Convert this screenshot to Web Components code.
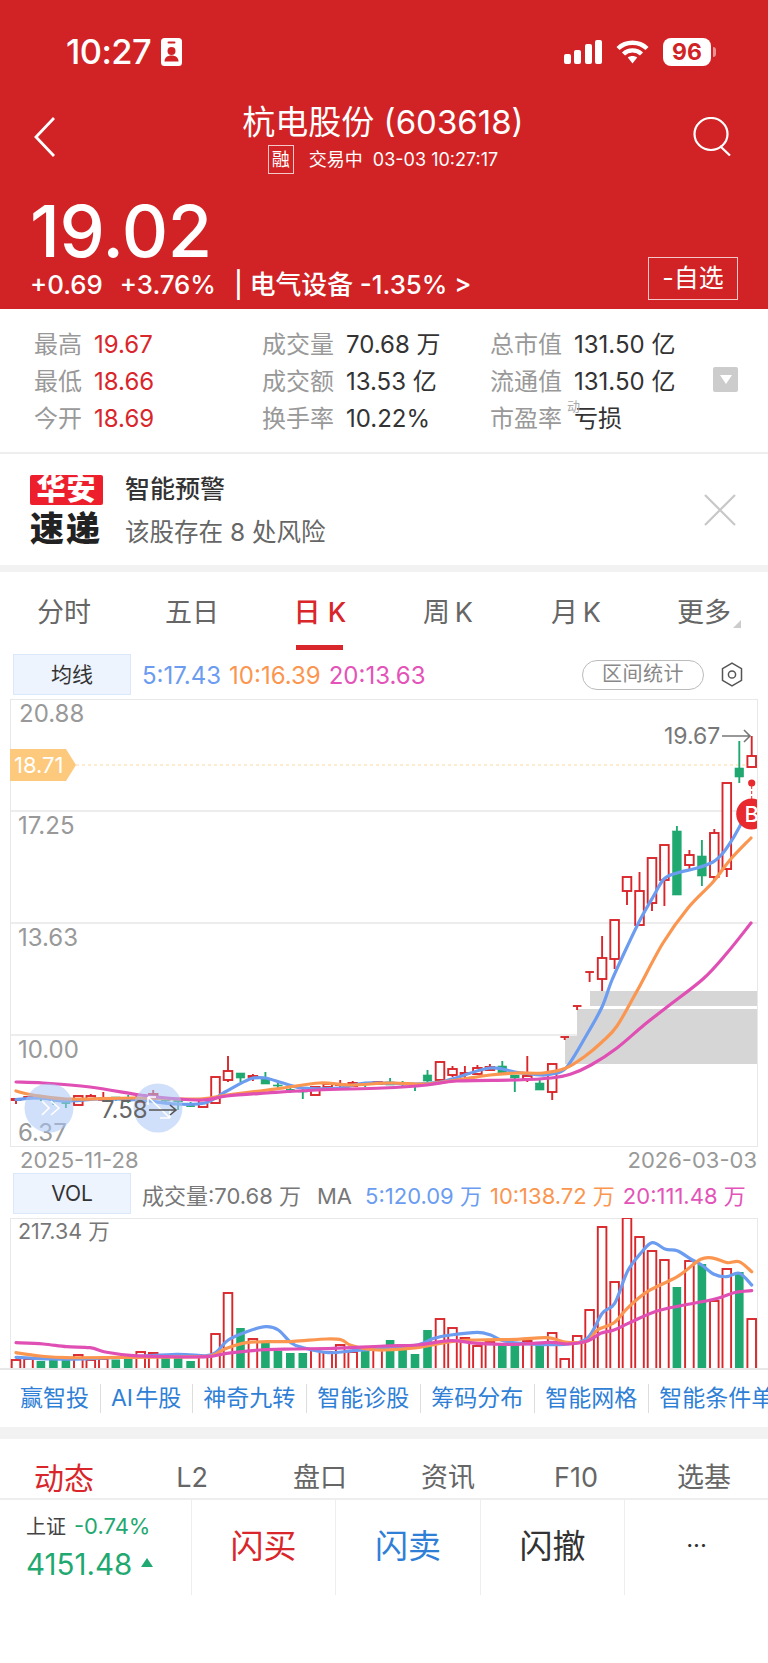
<!DOCTYPE html>
<html lang="zh">
<head>
<meta charset="utf-8">
<title>杭电股份</title>
<style>
  html, body { margin: 0; background: #fff; }
  body { width: 768px; height: 1663px; overflow: hidden; font-family: Inter, "Noto Sans CJK SC", sans-serif; color: #333; }
</style>
</head>
<body>
<x-stock-header></x-stock-header>
<x-quote-stats></x-quote-stats>
<x-alert-card></x-alert-card>
<x-tab-strip class="period" active="2" items="分时,五日,日 K,周&#8201;K,月&#8201;K,更多"></x-tab-strip>
<x-ma-row label="均线">
  <span style="color:#6b9cf0">5:17.43</span>
  <span style="color:#fb9650">10:16.39</span>
  <span style="color:#e353b8">20:13.63</span>
</x-ma-row>
<x-kline-chart></x-kline-chart>
<x-date-axis from="2025-11-28" to="2026-03-03"></x-date-axis>
<x-ma-row label="VOL" class="vol">
  <span style="color:#777">成交量:70.68 万</span>
  <span style="color:#777;margin-left:8px">MA</span>
  <span style="color:#6b9cf0;margin-left:5px">5:120.09 万</span>
  <span style="color:#fb9650">10:138.72 万</span>
  <span style="color:#e353b8">20:111.48 万</span>
</x-ma-row>
<x-vol-chart></x-vol-chart>
<x-quick-links items="赢智投,AI&#8202;牛股,神奇九转,智能诊股,筹码分布,智能网格,智能条件单"></x-quick-links>
<x-tab-strip class="detail" active="0" items="动态,L2,盘口,资讯,F10,选基"></x-tab-strip>
<x-trade-bar></x-trade-bar>

<script>
const RED = '#d9262b';
const GREEN = '#1fa971';
const BLUE = '#6b9cf0';
const ORANGE = '#fb9650';
const MAGENTA = '#e04fb4';
const FONT = 'Inter, "Noto Sans CJK SC", sans-serif';

const barX = i => 16 + 12.47 * i;

// catmull-rom through the read off points
function smooth(pts) {
    let d = `M${pts[0][0]} ${pts[0][1]}`;
    for (let i = 0; i < pts.length - 1; i++) {
        const p0 = pts[i - 1] || pts[i];
        const p1 = pts[i];
        const p2 = pts[i + 1];
        const p3 = pts[i + 2] || p2;
        const c1x = p1[0] + (p2[0] - p0[0]) / 6;
        const c1y = p1[1] + (p2[1] - p0[1]) / 6;
        const c2x = p2[0] - (p3[0] - p1[0]) / 6;
        const c2y = p2[1] - (p3[1] - p1[1]) / 6;
        d += `C${c1x.toFixed(1)} ${c1y.toFixed(1)} ${c2x.toFixed(1)} ${c2y.toFixed(1)} ${p2[0]} ${p2[1]}`;
    }
    return d;
}

function maLine(pts, color) {
    return `<path d="${smooth(pts)}" fill="none" stroke="${color}" stroke-width="3.2" stroke-linecap="round" stroke-linejoin="round"/>`;
}

class StockHeader extends HTMLElement {
    constructor() {
        super();
        this.attachShadow({ mode: 'open' });
    }
    connectedCallback() {
        this.shadowRoot.innerHTML = `<style>
        :host { display: block; height: 309px; background: #d12325; color: #fff; font-family: ${FONT}; overflow: hidden; }
        .status { display: flex; align-items: center; height: 28px; padding: 38px 57px 0 66px; }
        .time { font-size: 34.5px; font-weight: 500; letter-spacing: -0.6px; line-height: 28px; }
        .badge { margin-left: 10px; display: block; }
        .sys { margin-left: auto; display: flex; align-items: center; gap: 14px; }
        .batt { position: relative; width: 48px; height: 28px; border-radius: 8px; background: #fff; color: #d12325; font-size: 23px; font-weight: 700; line-height: 28px; text-align: center; }
        .batt::after { content: ''; position: absolute; right: -5px; top: 9px; width: 3px; height: 10px; border-radius: 0 3px 3px 0; background: rgba(255,255,255,.5); }
        .nav { display: grid; grid-template-columns: 1fr auto 1fr; align-items: start; margin-top: 36px; padding: 0 36px 0 34px; }
        .back { margin-top: 15px; display: block; }
        .search { margin-top: 15px; justify-self: end; display: block; }
        .mid { text-align: center; }
        .title { font-size: 33px; line-height: 41px; white-space: nowrap; }
        .sub { display: flex; justify-content: center; align-items: center; gap: 15px; margin-top: 2px; font-size: 18px; line-height: 29px; white-space: nowrap; }
        .rong { box-sizing: border-box; width: 26px; height: 29px; border: 1px solid rgba(255,255,255,.75); font-size: 18px; line-height: 27px; }
        .price-row { display: flex; justify-content: space-between; align-items: flex-end; margin-top: 21px; padding: 0 30px; }
        .price { font-size: 72px; font-weight: 500; line-height: 72px; letter-spacing: -0.5px; }
        .chg { display: flex; font-size: 25.8px; line-height: 30px; margin-top: 3px; white-space: nowrap; font-weight: 500; }
        .chg span + span { margin-left: 17px; }
        .watch { box-sizing: border-box; width: 90px; height: 43px; border: 1px solid rgba(255,255,255,.75); font-size: 25px; line-height: 41px; text-align: center; }
        </style>
        <div class="status">
            <span class="time">10:27</span>
            <svg class="badge" width="21" height="28" viewBox="0 0 21 28">
                <rect width="21" height="28" rx="3.5" fill="#fff"/>
                <rect x="6.5" y="3.5" width="8" height="2" rx="1" fill="#d12325"/>
                <circle cx="10.5" cy="13" r="4" fill="#d12325"/>
                <path d="M3.5 23.5c0-4 3-6 7-6s7 2 7 6z" fill="#d12325"/>
            </svg>
            <span class="sys">
                <svg width="38" height="24" viewBox="0 0 38 24" fill="#fff">
                    <rect x="0" y="14" width="7" height="10" rx="2"/>
                    <rect x="10" y="10" width="7" height="14" rx="2"/>
                    <rect x="21" y="4" width="7" height="20" rx="2"/>
                    <rect x="31" y="0" width="7" height="24" rx="2"/>
                </svg>
                <svg width="33" height="25" viewBox="0 0 33 25" fill="none" stroke="#fff" stroke-width="4.4">
                    <path d="M2 8.5C10 .8 23 .8 31 8.5"/>
                    <path d="M7.5 14c5-4.8 13-4.8 18 0"/>
                    <path d="M11.8 17.6l4.7 6 4.7-6c-2.6-2-6.8-2-9.4 0z" fill="#fff" stroke="none"/>
                </svg>
                <span class="batt">96</span>
            </span>
        </div>
        <div class="nav">
            <svg class="back" width="21" height="40" viewBox="0 0 21 40" fill="none" stroke="#fff" stroke-width="2.8">
                <path d="M20 1L2 20l18 19"/>
            </svg>
            <div class="mid">
                <div class="title">杭电股份 (603618)</div>
                <div class="sub">
                    <span class="rong">融</span>
                    <span>交易中&nbsp; 03-03 10:27:17</span>
                </div>
            </div>
            <svg class="search" width="39" height="39" viewBox="0 0 39 39" fill="none" stroke="#fff" stroke-width="2.2">
                <ellipse cx="18" cy="17" rx="16.5" ry="16"/>
                <path d="M27 29l10 9.5"/>
            </svg>
        </div>
        <div class="price-row">
            <div>
                <div class="price">19.02</div>
                <div class="chg">
                    <span>+0.69</span><span>+3.76%</span><span style="margin-left:18px">|&nbsp;电气设备 -1.35% &gt;</span>
                </div>
            </div>
            <div class="watch">-自选</div>
        </div>`;
    }
}

class QuoteStats extends HTMLElement {
    constructor() {
        super();
        this.attachShadow({ mode: 'open' });
    }
    connectedCallback() {
        const cell = (label, value, cls) => `<div class="cell"><span class="k">${label}</span><span class="v ${cls || ''}">${value}</span></div>`;
        this.shadowRoot.innerHTML = `<style>
        :host { display: block; box-sizing: border-box; height: 145px; padding: 15px 0 0 34px; border-bottom: 2px solid #eee; font-family: ${FONT}; font-size: 24px; }
        .grid { display: grid; grid-auto-flow: column; grid-template-columns: 228px 228px 223px 25px; grid-template-rows: repeat(3, 37px); align-items: center; white-space: nowrap; }
        .cell { position: relative; display: flex; align-items: baseline; gap: 12px; }
        .k { color: #999; }
        .v { color: #333; }
        .r { color: ${RED}; }
        .sup { position: absolute; left: 77px; top: -3px; font-size: 13px; color: #aaa; }
        .more { grid-column: 4; grid-row: 2; width: 25px; height: 25px; border-radius: 2px; background: #ccc; display: flex; align-items: center; justify-content: center; }
        .more::after { content: ''; border: 6px solid transparent; border-top: 9px solid #fff; border-bottom: 0; }
        </style>
        <div class="grid">
            ${cell('最高', '19.67', 'r')}${cell('最低', '18.66', 'r')}${cell('今开', '18.69', 'r')}
            ${cell('成交量', '70.68 万')}${cell('成交额', '13.53 亿')}${cell('换手率', '10.22%')}
            ${cell('总市值', '131.50 亿')}${cell('流通值', '131.50 亿')}
            <div class="cell"><span class="k">市盈率</span><span class="sup">动</span><span class="v">亏损</span></div>
            <div class="more"></div>
        </div>`;
    }
}

class AlertCard extends HTMLElement {
    constructor() {
        super();
        this.attachShadow({ mode: 'open' });
    }
    connectedCallback() {
        this.shadowRoot.innerHTML = `<style>
        :host { display: flex; align-items: center; box-sizing: border-box; height: 118px; padding: 0 32px 0 30px; border-bottom: 7px solid #f2f2f2; font-family: ${FONT}; }
        .logo { width: 73px; text-align: center; font-weight: 900; line-height: 1; }
        .hua { height: 30px; border-radius: 2px; background: #ee1f2d; color: #fff; font-size: 29px; line-height: 30px; letter-spacing: 1px; }
        .su { margin-top: 9px; color: #222; font-size: 34px; line-height: 30px; letter-spacing: 2px; margin-left: -1px; white-space: nowrap; }
        .txt { margin-left: 22px; padding-top: 2px; }
        .t1 { font-size: 25px; line-height: 34px; font-weight: 500; color: #333; }
        .t2 { font-size: 24.5px; line-height: 34px; margin-top: 9px; color: #666; white-space: nowrap; }
        svg { margin-left: auto; display: block; }
        </style>
        <div class="logo"><div class="hua">华安</div><div class="su">速递</div></div>
        <div class="txt">
            <div class="t1">智能预警</div>
            <div class="t2">该股存在 8 处风险</div>
        </div>
        <svg width="32" height="32" viewBox="0 0 32 32" stroke="#c8c8c8" stroke-width="2.2"><path d="M1 1l30 30M31 1L1 31"/></svg>`;
    }
}

class TabStrip extends HTMLElement {
    constructor() {
        super();
        this.attachShadow({ mode: 'open' });
    }
    connectedCallback() {
        const active = +this.getAttribute('active');
        const items = this.getAttribute('items').split(',');
        const period = this.classList.contains('period');
        const tabs = items.map((t, i) => {
            const corner = period && i == items.length - 1 ? '<i class="corner"></i>' : '';
            return `<div class="tab ${i == active ? 'on' : ''}">${t}${corner}</div>`;
        }).join('');
        this.shadowRoot.innerHTML = `<style>
        :host { display: grid; grid-template-columns: repeat(6, 128px); box-sizing: border-box; font-family: ${FONT}; font-size: 27px; color: #666; }
        :host(.period) { height: 82px; }
        :host(.detail) { height: 61px; border-bottom: 2px solid #eee; }
        .tab { position: relative; text-align: center; line-height: 82px; white-space: nowrap; }
        :host(.detail) .tab { line-height: 78px; }
        :host(.detail) .on { font-size: 30px; }
        .on { color: ${RED}; }
        :host(.period) .on { font-weight: 500; }
        :host(.period) .on::after { content: ''; position: absolute; left: 40px; width: 47px; bottom: 4px; height: 5px; background: ${RED}; }
        .corner { position: absolute; right: 27px; top: 48px; width: 0; height: 0; border-left: 8px solid transparent; border-bottom: 8px solid #ccc; }
        </style>${tabs}`;
    }
}

class MaRow extends HTMLElement {
    constructor() {
        super();
        this.attachShadow({ mode: 'open' });
    }
    connectedCallback() {
        const legend = this.classList.contains('vol') ? '' : `
            <span class="range">区间统计</span>
            <svg class="gear" width="22" height="25" viewBox="0 0 22 25" fill="none" stroke="#555" stroke-width="1.5">
                <path d="M11 1.2l9.5 5.5v11.6L11 23.8 1.5 18.3V6.7z"/>
                <circle cx="11" cy="12.5" r="3.6"/>
            </svg>`;
        this.shadowRoot.innerHTML = `<style>
        :host { display: flex; align-items: center; height: 45px; padding: 0 25px 4px 13px; font-family: ${FONT}; font-size: 24px; white-space: nowrap; box-sizing: border-box; }
        :host(.vol) { font-size: 22px; }
        .btn { box-sizing: border-box; flex: none; width: 118px; height: 41px; margin-right: 11px; border: 1px solid #dbe8fc; background: #eef4fe; color: #333; font-size: 21px; line-height: 39px; text-align: center; }
        .vals { display: flex; align-items: baseline; gap: 8px; padding-top: 1px; }
        .range { box-sizing: border-box; margin-left: auto; width: 122px; height: 30px; border: 1px solid #bbb; border-radius: 15px; color: #888; font-size: 20px; line-height: 27px; text-align: center; letter-spacing: 0.5px; }
        .gear { margin-left: 17px; display: block; }
        </style>
        <div class="btn">${this.getAttribute('label')}</div>
        <div class="vals"><slot></slot></div>${legend}`;
    }
}

const CANDLES = [
    // [body top, body bottom, wick top, wick bottom, up?]
    [1099, 1100, 1099, 1104, 1], [1097, 1098, 1096, 1100, 1], [1098, 1099, 1096, 1101, 0], [1099, 1100, 1098, 1105, 0],
    [1103, 1103, 1099, 1108, 0], [1096, 1105, 1096, 1105, 1], [1096, 1099, 1094, 1100, 1], [1098, 1100, 1092, 1100, 1],
    [1097, 1098, 1097, 1101, 0], [1099, 1101, 1095, 1103, 0], [1095, 1102, 1095, 1102, 1], [1094, 1096, 1090, 1097, 1],
    [1100, 1101, 1098, 1104, 0], [1100, 1102, 1100, 1110, 0], [1106, 1106, 1102, 1107, 0], [1100, 1107, 1100, 1107, 1],
    [1077, 1103, 1077, 1103, 1], [1071, 1080, 1056, 1082, 1], [1073, 1078, 1073, 1082, 0], [1076, 1077, 1074, 1081, 1],
    [1079, 1084, 1072, 1084, 0], [1085, 1086, 1083, 1088, 0], [1090, 1090, 1088, 1093, 0], [1091, 1092, 1088, 1099, 0],
    [1087, 1095, 1087, 1095, 1], [1084, 1087, 1084, 1087, 1], [1084, 1085, 1080, 1087, 1], [1083, 1086, 1081, 1086, 1],
    [1083, 1084, 1083, 1087, 0], [1082, 1084, 1082, 1085, 1], [1082, 1085, 1078, 1085, 0], [1084, 1084, 1081, 1086, 0],
    [1085, 1085, 1085, 1091, 0], [1075, 1081, 1070, 1083, 0], [1062, 1080, 1062, 1080, 1], [1069, 1075, 1066, 1077, 1],
    [1073, 1074, 1066, 1078, 1], [1068, 1074, 1065, 1074, 1], [1067, 1070, 1064, 1070, 1], [1066, 1073, 1061, 1075, 0],
    [1075, 1078, 1075, 1092, 0], [1076, 1079, 1056, 1082, 1], [1083, 1090, 1080, 1090, 0], [1064, 1092, 1064, 1100, 1],
    [1037, 1037, 1037, 1040, 1], [1006, 1006, 1006, 1010, 1], [972, 972, 972, 982, 1], [958, 979, 936, 991, 1],
    [920, 959, 920, 969, 1], [877, 891, 877, 905, 1], [891, 925, 872, 925, 1], [858, 903, 858, 911, 1],
    [845, 880, 845, 906, 1], [831, 895, 826, 895, 0], [855, 865, 850, 869, 1], [856, 876, 840, 886, 0],
    [833, 877, 829, 881, 1], [783, 869, 783, 877, 1], [768, 777, 741, 783, 0], [756, 767, 736, 767, 1],
];

const KLINE_MA = [
    [BLUE, [[16, 1099.5], [40, 1098], [65, 1101], [100, 1099], [140, 1100], [175, 1104], [205, 1103], [225, 1092], [250, 1079], [265, 1078], [283, 1083], [303, 1088], [340, 1088], [365, 1083], [415, 1084], [440, 1082], [452, 1079], [490, 1068], [515, 1072], [540, 1075], [552, 1074], [566, 1068], [586, 1036], [602, 1007], [612, 980], [627, 947], [640, 920], [653, 897], [664, 879], [677, 873], [697, 868], [713, 862], [723, 853], [732, 840], [741, 824], [746, 815]]],
    [ORANGE, [[16, 1091], [33, 1095], [67, 1099], [133, 1098], [200, 1099], [227, 1095], [260, 1091], [283, 1088], [320, 1083], [350, 1085], [390, 1083], [427, 1084], [457, 1080], [490, 1075], [517, 1073], [543, 1073], [566, 1068], [584, 1057], [602, 1042], [617, 1026], [637, 991], [663, 943], [688, 908], [713, 882], [730, 860], [751, 838]]],
    [MAGENTA, [[16, 1082], [43, 1083], [90, 1087], [140, 1095], [167, 1098], [203, 1100], [227, 1096], [267, 1093], [317, 1090], [383, 1088], [427, 1085], [457, 1081], [517, 1080], [551, 1078], [571, 1074], [591, 1065], [617, 1048], [644, 1025], [667, 1007], [703, 979], [727, 953], [751, 923]]],
];

class KlineChart extends HTMLElement {
    constructor() {
        super();
        this.attachShadow({ mode: 'open' });
    }
    _candles() {
        return CANDLES.map((c, i) => {
            const x = barX(i).toFixed(1);
            const col = c[4] ? RED : GREEN;
            const x0 = (barX(i) - 4.3).toFixed(1);
            let s = `<path d="M${x} ${c[2]}V${c[3]}" stroke="${col}" stroke-width="1.9"/>`;
            if (c[1] - c[0] < 1) {
                s += `<path d="M${x0} ${c[0]}h8.6" stroke="${col}" stroke-width="1.9"/>`;
            } else if (c[4]) {
                s += `<rect x="${x0}" y="${c[0]}" width="8.6" height="${c[1] - c[0]}" fill="#fff" stroke="${col}" stroke-width="1.9"/>`;
            } else {
                s += `<rect x="${x0}" y="${c[0]}" width="8.6" height="${c[1] - c[0]}" fill="${col}" stroke="${col}" stroke-width="0.6"/>`;
            }
            return s;
        }).join('');
    }
    connectedCallback() {
        this.shadowRoot.innerHTML = `<style>
        :host { display: block; box-sizing: border-box; width: 748px; height: 449px; margin-left: 10px; }
        svg { display: block; font-family: ${FONT}; }
        </style>
        <svg width="748" height="449" viewBox="10 699 748 449">
            <rect x="10.5" y="699.5" width="747" height="447" fill="#fff" stroke="#e8e8e8"/>
            <path d="M11 811h746M11 923h746M11 1035h746" stroke="#e8e8e8" stroke-width="1.5"/>
            <path d="M590 991h167v15H590zM577 1009h180v27H577zM565 1036h192v28H565z" fill="#d6d6d6"/>
            <path d="M76 765H757" stroke="#fdd9a4" stroke-width="1.2" stroke-dasharray="3 3"/>
            <g fill="#999" font-size="24">
                <text x="19" y="722">20.88</text>
                <text x="18" y="834">17.25</text>
                <text x="18" y="946">13.63</text>
                <text x="18" y="1058">10.00</text>
                <text x="18" y="1141">6.37</text>
            </g>
            ${this._candles()}
            ${KLINE_MA.map(m => maLine(m[1], m[0])).join('')}
            <polygon points="10,749 66,749 76,765 66,781 10,781" fill="#fdc97c"/>
            <text x="14" y="773" fill="#fff" font-size="22">18.71</text>
            <circle cx="49" cy="1108" r="24.5" fill="#a9c6f6" opacity=".55"/>
            <circle cx="158" cy="1108" r="24.5" fill="#a9c6f6" opacity=".55"/>
            <path d="M42 1101l7 7-7 7M51 1101l8 7-8 7" fill="none" stroke="#fff" stroke-width="1.6"/>
            <path d="M148 1097l22 21M148 1097h0v8M148 1097h8M170 1118h-10M170 1118v-8" fill="none" stroke="#fff" stroke-width="1.6"/>
            <text x="101" y="1118" fill="#666" font-size="24">7.58</text>
            <path d="M149 1110h27M170 1105l6 5-6 5" fill="none" stroke="#555" stroke-width="1.6"/>
            <text x="664" y="744" fill="#777" font-size="23">19.67</text>
            <path d="M722 736h28M744 730l6 6-6 6" fill="none" stroke="#777" stroke-width="1.6"/>
            <circle cx="751.7" cy="783" r="3.6" fill="#e8292e"/>
            <path d="M751.7 786v14" stroke="#e8292e" stroke-width="1" stroke-dasharray="3 2"/>
            <clipPath id="edge"><rect x="10" y="699" width="747" height="449"/></clipPath>
            <g clip-path="url(#edge)">
                <circle cx="751.7" cy="814" r="15.5" fill="#e8292e"/>
                <text x="751.7" y="822" fill="#fff" font-size="22" font-weight="500" text-anchor="middle">B</text>
            </g>
        </svg>`;
    }
}

class DateAxis extends HTMLElement {
    static observedAttributes = ['from', 'to'];
    constructor() {
        super();
        this.attachShadow({ mode: 'open' });
    }
    connectedCallback() {
        this.shadowRoot.innerHTML = `<style>
        :host { display: flex; justify-content: space-between; box-sizing: border-box; width: 768px; height: 25px; padding: 0 11px 0 20px; color: #999; font-family: ${FONT}; font-size: 22px; line-height: 25px; }
        </style><span>${this.getAttribute('from')}</span><span>${this.getAttribute('to')}</span>`;
    }
}

const VOLS = [
    [1360, 1], [1359, 1], [1361, 0], [1359, 0], [1360, 0], [1355, 1], [1360, 1], [1359, 1], [1359.5, 0], [1359, 0],
    [1352, 1], [1353, 1], [1357, 0], [1357, 0], [1361, 0], [1357, 1], [1334, 1], [1293, 1], [1328, 0], [1339, 1],
    [1342, 0], [1351, 0], [1353, 0], [1353, 0], [1350, 1], [1352, 1], [1345, 1], [1352, 1], [1351, 0], [1350, 1],
    [1340, 0], [1350, 0], [1354, 0], [1330, 0], [1319, 1], [1328, 1], [1338, 1], [1346, 1], [1342, 1], [1343, 0],
    [1342, 0], [1341, 1], [1343, 0], [1333, 1], [1359, 1], [1336, 1], [1310, 1], [1227, 1], [1282, 1], [1218, 1],
    [1237, 1], [1251, 1], [1260, 1], [1287, 0], [1261, 1], [1264, 0], [1301, 1], [1269, 1], [1272, 0], [1319, 1],
];

// read off the zoomed crops, x and y are crop pixels at 3x
const volPts = (left, right) => [...left.map(p => [p[0] / 3, 1160 + p[1] / 3]), ...right.map(p => [384 + p[0] / 3, 1160 + p[1] / 3])].map(p => [+p[0].toFixed(1), +p[1].toFixed(1)]);

const VOL_MA = [
    [BLUE, volPts([[48, 592], [150, 597], [250, 597], [400, 590], [530, 583], [620, 587], [650, 575], [685, 540], [740, 515], [797, 500], [835, 510], [875, 550], [910, 563], [985, 578], [1060, 572]],
        [[0, 565], [100, 555], [150, 535], [200, 525], [280, 517], [320, 525], [360, 543], [440, 552], [540, 553], [610, 535], [655, 460], [692, 430], [730, 335], [770, 280], [805, 248], [845, 268], [880, 272], [925, 300], [953, 315], [990, 343], [1028, 350], [1066, 340], [1103, 375]])],
    [ORANGE, volPts([[48, 578], [120, 588], [200, 593], [400, 592], [600, 590], [640, 585], [680, 565], [740, 548], [800, 545], [880, 544], [980, 537], [1025, 540], [1050, 555], [1100, 567]],
        [[0, 570], [100, 563], [200, 545], [280, 540], [400, 538], [490, 533], [550, 547], [610, 543], [640, 510], [690, 488], [730, 445], [790, 395], [880, 350], [950, 298], [990, 295], [1030, 308], [1066, 305], [1103, 335]])],
    [MAGENTA, volPts([[48, 548], [130, 552], [200, 560], [270, 563], [320, 577], [400, 587], [500, 590], [620, 590], [680, 580], [780, 570], [880, 567], [1000, 565]],
        [[0, 558], [100, 555], [200, 542], [280, 550], [400, 553], [500, 547], [550, 552], [610, 543], [650, 520], [690, 510], [740, 487], [830, 450], [990, 418], [1050, 398], [1103, 392]])],
];

class VolChart extends HTMLElement {
    constructor() {
        super();
        this.attachShadow({ mode: 'open' });
    }
    connectedCallback() {
        const bars = VOLS.map((v, i) => {
            const x = (barX(i) - 4.3).toFixed(1);
            if (v[1])
                return `<rect x="${x}" y="${v[0]}" width="8.6" height="${1369 - v[0]}" fill="#fff" stroke="${RED}" stroke-width="1.9"/>`;
            return `<rect x="${x}" y="${v[0]}" width="8.6" height="${1369 - v[0]}" fill="${GREEN}"/>`;
        }).join('');
        this.shadowRoot.innerHTML = `<style>
        :host { display: block; box-sizing: border-box; width: 748px; height: 150px; margin: 0 0 0 10px; }
        svg { display: block; font-family: ${FONT}; }
        </style>
        <svg width="748" height="150" viewBox="10 1218 748 150">
            <rect x="10.5" y="1218.5" width="747" height="150" fill="#fff" stroke="#e8e8e8"/>
            <text x="18" y="1239" fill="#777" font-size="21.5">217.34 万</text>
            ${bars}
            ${VOL_MA.map(m => maLine(m[1], m[0])).join('')}
        </svg>`;
    }
}

class QuickLinks extends HTMLElement {
    constructor() {
        super();
        this.attachShadow({ mode: 'open' });
    }
    connectedCallback() {
        const items = this.getAttribute('items').split(',').map(t => `<span class="it">${t}</span>`).join('');
        this.shadowRoot.innerHTML = `<style>
        :host { display: flex; align-items: center; box-sizing: border-box; height: 71px; padding: 0 0 0 20px; border-top: 2px solid #e8e8e8; border-bottom: 12px solid #f2f2f2; overflow: hidden; font-family: ${FONT}; font-size: 23px; color: #2f7fd6; white-space: nowrap; }
        .it { flex: none; height: 29px; line-height: 29px; padding: 0 11px 0 10px; border-left: 1px solid #ddd; }
        .it:first-of-type { border-left: 0; padding-left: 0; }
        </style>${items}`;
    }
}

class TradeBar extends HTMLElement {
    constructor() {
        super();
        this.attachShadow({ mode: 'open' });
    }
    connectedCallback() {
        this.shadowRoot.innerHTML = `<style>
        :host { display: grid; grid-template-columns: 192px 144px 145px 144px 143px; height: 95px; font-family: ${FONT}; }
        .cell { border-right: 1px solid #eee; text-align: center; font-size: 33px; line-height: 92px; }
        .cell:last-child { border-right: 0; }
        .idx { padding: 9px 0 0 26px; text-align: left; line-height: 1; white-space: nowrap; }
        .l1 { display: flex; gap: 8px; align-items: baseline; font-size: 20px; line-height: 34px; color: #444; }
        .l1 b { font-weight: 400; color: ${GREEN}; font-size: 22px; }
        .l2 { display: flex; align-items: center; gap: 9px; margin-top: 1px; color: ${GREEN}; font-size: 29.5px; line-height: 38px; }
        .l2::after { content: ''; border: 6.5px solid transparent; border-bottom: 9px solid ${GREEN}; border-top: 0; margin-top: -3px; }
        .buy { color: ${RED}; }
        .sell { color: #2f7fd6; }
        .undo { color: #333; }
        .more { color: #333; font-size: 24px; line-height: 92px; }
        </style>
        <div class="cell idx">
            <div class="l1"><span>上证</span><b>-0.74%</b></div>
            <div class="l2">4151.48</div>
        </div>
        <div class="cell buy">闪买</div>
        <div class="cell sell">闪卖</div>
        <div class="cell undo">闪撤</div>
        <div class="cell more">···</div>`;
    }
}

customElements.define('x-stock-header', StockHeader);
customElements.define('x-quote-stats', QuoteStats);
customElements.define('x-alert-card', AlertCard);
customElements.define('x-tab-strip', TabStrip);
customElements.define('x-ma-row', MaRow);
customElements.define('x-kline-chart', KlineChart);
customElements.define('x-date-axis', DateAxis);
customElements.define('x-vol-chart', VolChart);
customElements.define('x-quick-links', QuickLinks);
customElements.define('x-trade-bar', TradeBar);
</script>
</body>
</html>
